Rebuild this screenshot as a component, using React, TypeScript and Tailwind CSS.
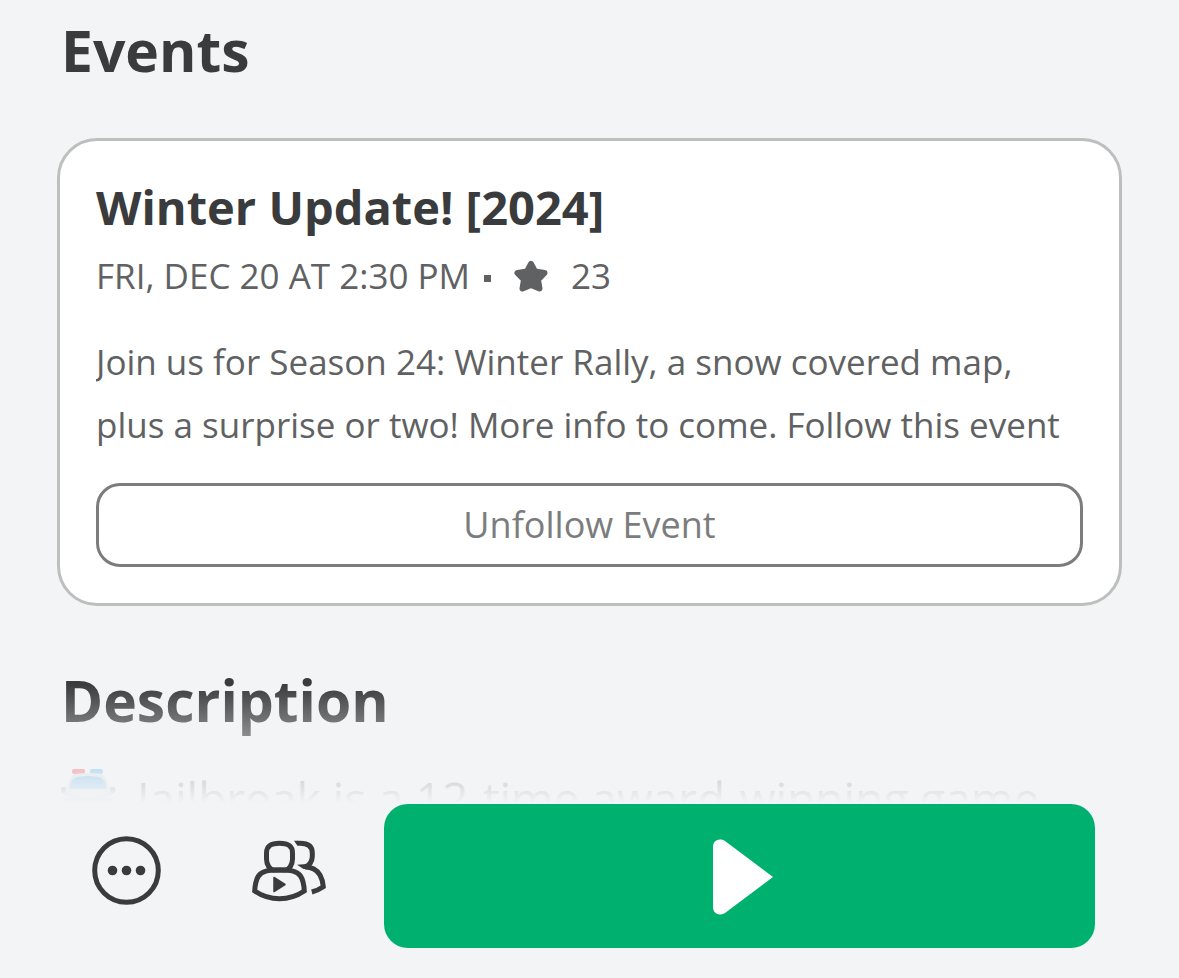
interface GameEvent {
  title: string;
  date: string;
  followers: number;
  summary: string;
}

const event: GameEvent = {
  title: "Winter Update! [2024]",
  date: "FRI, DEC 20 AT 2:30 PM",
  followers: 23,
  summary:
    "Join us for Season 24: Winter Rally, a snow covered map, plus a surprise or two! More info to come. Follow this event",
};

const StarIcon = () => (
  <svg className="h-8 w-9 shrink-0" viewBox="0 0 36 32" fill="currentColor" aria-hidden="true">
    <path
      d="M18 4 L22 11.500 L31.500 13 L25 19.800 L26.500 28.500 L18 25 L9.500 28.500 L11 19.800 L4.500 13 L14 11.500 Z"
      stroke="currentColor"
      strokeWidth="6"
      strokeLinejoin="round"
    />
  </svg>
);

const MoreIcon = () => (
  <svg className="size-[70px]" viewBox="0 0 70 70" fill="currentColor" aria-hidden="true">
    <circle cx="35.500" cy="35.500" r="31.800" fill="none" stroke="currentColor" strokeWidth="5" />
    <circle cx="21.500" cy="35.500" r="4.800" />
    <circle cx="35.500" cy="35.500" r="4.800" />
    <circle cx="49.500" cy="35.500" r="4.800" />
  </svg>
);

const PartyIcon = () => (
  <svg
    className="h-[64px] w-[76px]"
    viewBox="0 0 76 64"
    fill="none"
    stroke="currentColor"
    strokeWidth="5"
    aria-hidden="true"
  >
    <path d="M28.500 5.300 C37 5.300 41.500 8 41.500 15 V21 C41.500 27 38 32 34 32 H23 C19 32 15.500 27 15.500 21 V15 C15.500 8 20 5.300 28.500 5.300 Z" />
    <path d="M28.500 32 C40 32 46 33 49.500 38 C52.500 42.500 53 47 53.300 53 C46 58 37 60.700 28.500 60.700 C20 60.700 11 58 3.700 53 C4 47 4.500 42.500 7.500 38 C11 33 17 32 28.500 32 Z" />
    <path d="M46.500 5.300 H49 C57 5.300 61.300 8 61.300 15 V18.500 C61.300 23.500 58 28 54 29 C61 29 66 32 69 37 C71.500 41.500 72 44.500 72.300 48.700 C69 51 65 52.800 60.800 54" />
    <path d="M43 2.800 H47 V7.800 C45.500 7 45 5.500 43 2.800 Z M46 26.700 L56 26 V31 H52.500 Z" fill="currentColor" stroke="none" />
    <path d="M23 39.500 L34 46.500 L23 53.500 Z" fill="currentColor" strokeWidth="1.500" strokeLinejoin="round" />
  </svg>
);

const PlayIcon = () => (
  <svg className="h-[76px] w-[62px]" viewBox="0 0 62 76" fill="currentColor" aria-hidden="true">
    <path d="M1 8 C1 1.500 7 -1.500 13 2 L61 38 L13 74 C7 77.500 1 74.500 1 68 Z" />
  </svg>
);

const PoliceCar = () => (
  <svg className="h-[54px] w-[56px] shrink-0" viewBox="1 0 56 54" role="img" aria-label="Police car">
    <rect x="12" y="1" width="13" height="5" rx="2" fill="#f0364a" />
    <rect x="30" y="1" width="13" height="5" rx="2" fill="#4bb0f2" />
    <ellipse cx="4" cy="22" rx="3.500" ry="3" fill="#7b8387" />
    <ellipse cx="52" cy="22" rx="3.500" ry="3" fill="#7b8387" />
    <path d="M6 22 Q9 7 15 6 Q28 4 41 6 Q47 7 50 22 L54 32 V46 H2 V32 Z" fill="#d5d9db" />
    <path d="M9 21 Q11 10 17 9 Q28 7 39 9 Q45 10 47 21 Z" fill="#4fabe8" />
    <path d="M4 25 Q16 31 28 31 Q40 31 52 25" fill="none" stroke="#b0bec5" strokeWidth="2" />
    <rect x="3" y="30" width="50" height="14" rx="4" fill="#90a4ae" />
    <rect x="6" y="44" width="9" height="8" rx="2" fill="#37474f" />
    <rect x="41" y="44" width="9" height="8" rx="2" fill="#37474f" />
  </svg>
);

export default function App() {
  return (
    <div className="flex h-screen flex-col overflow-hidden bg-[#f2f4f5] font-['Open_Sans',sans-serif] text-[#393b3d]">
      <main className="relative min-h-0 flex-1 overflow-hidden px-[57px]">
        <section>
          <h2 className="pt-2 pl-1 text-[57px] leading-[84px] font-bold">Events</h2>

          <article className="mt-[46px] rounded-[40px] border-3 border-[#bdbebe] bg-white p-9">
            <h3 className="text-[47px] leading-[60px] font-bold">{event.title}</h3>
            <div className="mt-[11px] flex items-center text-[35px] leading-[56px] text-[#606162]">
              <span>{event.date}</span>
              <span className="mt-1 mr-[22px] ml-[14px] size-[7px] bg-current" />
              <StarIcon />
              <span className="ml-[22px]">{event.followers}</span>
            </div>
            <p className="mt-[26px] line-clamp-2 text-[35px] leading-[63px] text-[#606162]">{event.summary}</p>
            <button
              type="button"
              className="mt-[27px] h-[84px] w-full rounded-3xl border-3 border-[#7b7c7d] text-[36px] text-[#7b7c7d]"
            >
              Unfollow Event
            </button>
          </article>
        </section>

        <section className="mt-[52px] pl-1">
          <h2 className="text-[57px] leading-[84px] font-bold">Description</h2>
          <div className="mt-[26px] flex items-start gap-5">
            <PoliceCar />
            <p className="text-[46px] leading-[60px] whitespace-nowrap text-[#606162]">
              Jailbreak is a 12-time award-winning game
            </p>
          </div>
        </section>

        <div className="pointer-events-none absolute inset-x-0 bottom-0 h-[120px] bg-linear-to-b from-[#f2f4f5]/0 to-[#f2f4f5] to-99%" />
      </main>

      <footer className="flex items-center bg-[#f2f4f5] pr-[84px] pb-[30px] pl-[91px]">
        <button type="button" aria-label="More options" className="-mt-3">
          <MoreIcon />
        </button>
        <button type="button" aria-label="Play together" className="-mt-3 ml-[90px]">
          <PartyIcon />
        </button>
        <button
          type="button"
          aria-label="Play"
          className="ml-[57px] flex h-36 flex-1 items-center justify-center rounded-3xl bg-[#00b06f] pt-0.5 pl-1.5 text-white"
        >
          <PlayIcon />
        </button>
      </footer>
    </div>
  );
}
